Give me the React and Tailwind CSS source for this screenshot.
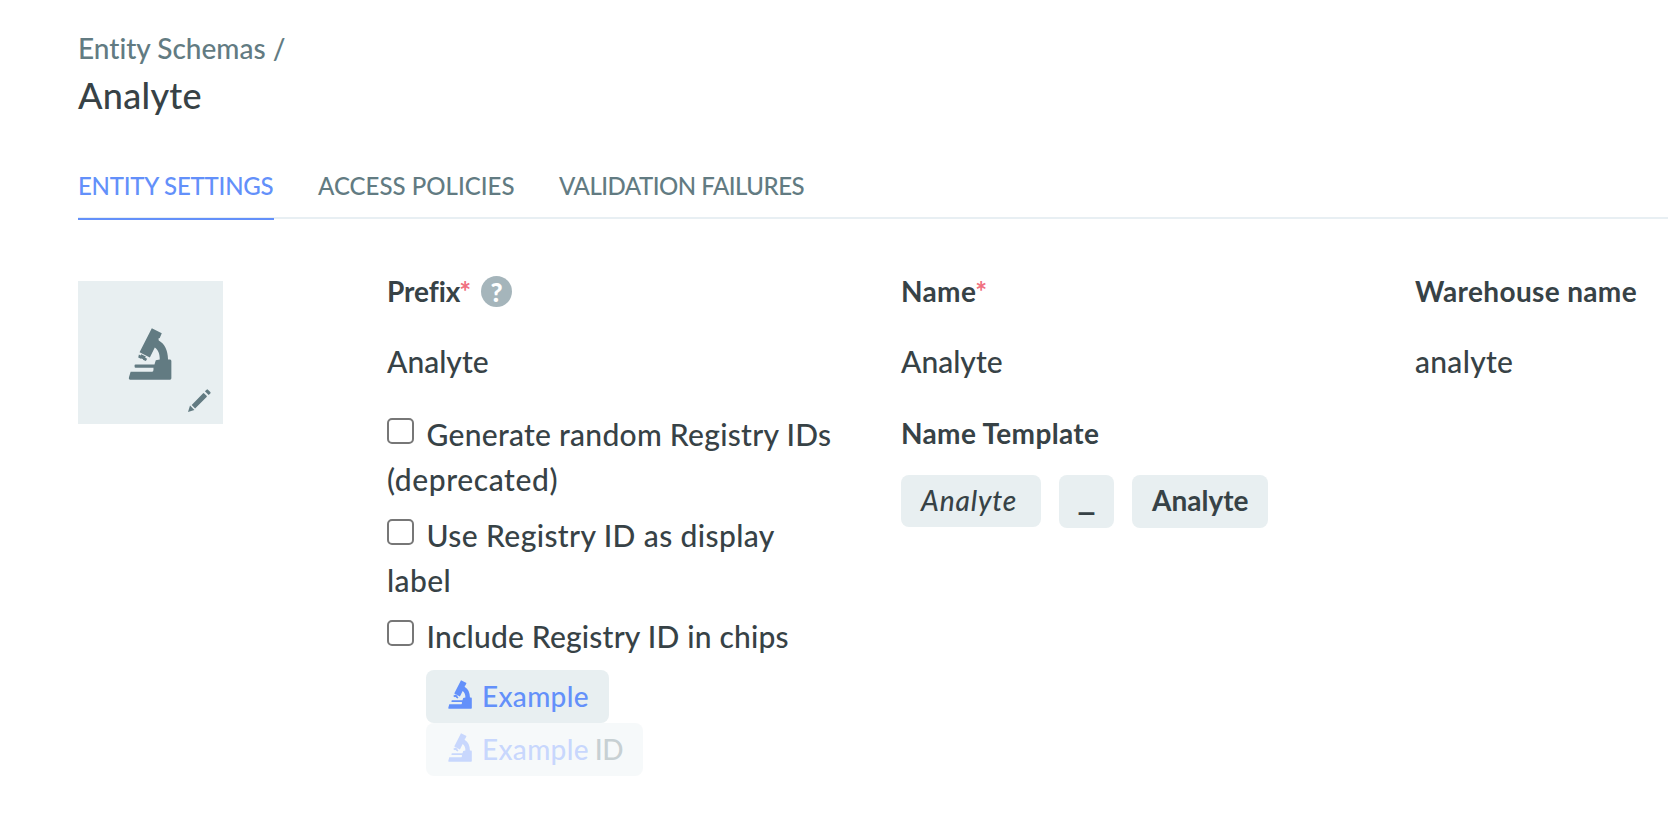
function Microscope({ className }) {
  return (
    <svg viewBox="205 174 131 157" className={className} fill="currentColor" aria-hidden="true">
      <path d="M276 175 L306 190 L300 204 L296 206 L297 212 C315 222 324 241 325 269 L331 269 Q335 270 335 274 V326 Q335 330 331 330 H210 Q205 330 207 323 L212 306 H277 Q281 306 281 300 V294 H227 Q224 294 224 291 V286 Q224 284 227 284 H284 L288 271 L300 269 C300 254 296 240 285 233 L270 263 L239 247 Z" />
      <path d="M237 254 L242 257 L244 253 L258 260 L256 264 L262 267 L258 274 L249 270 L250 268 L245 266 L243 267 L235 263 Z" />
    </svg>
  );
}

function Pencil({ className }) {
  return (
    <svg viewBox="384 356 68 68" className={className} fill="currentColor" aria-hidden="true">
      <path d="M390 405 L403 418 L384 424 Z" />
      <path d="M395 403 L428 369 Q430 367 432 369 L439 376 Q441 378 439 380 L405 414 Z" />
      <path d="M434 363 L439 358 Q441 356 443 358 L450 365 Q452 367 450 369 L445 374 Z" />
    </svg>
  );
}

function Tab({ children, className, active }) {
  return (
    <button
      className={`h-[50px] shrink-0 border-b-2 text-left text-[24px] leading-8 font-medium whitespace-nowrap pb-4 ${
        active ? 'border-[#6390fa] text-[#6390fa]' : 'border-transparent text-[#627b82]'
      } ${className}`}
    >
      {children}
    </button>
  );
}

function Label({ children, required, className = 'tracking-[0.35px]' }) {
  return (
    <span className={`flex text-[28px] leading-10 font-bold whitespace-nowrap ${className}`}>
      {children}
      {required && <span className="-ml-px font-bold text-[#f0717f] tracking-normal">*</span>}
    </span>
  );
}

function Value({ children }) {
  return <div className="mt-7 text-[30px] leading-[45px] font-medium">{children}</div>;
}

function Option({ children, className }) {
  return (
    <label className={`block text-[30px] leading-[45px] font-medium ${className}`}>
      <input
        type="checkbox"
        className="mr-[13px] inline-block size-[26.5px] appearance-none rounded-[5px] border-2 border-[#777] bg-white align-[2px]"
      />
      {children}
    </label>
  );
}

export default function App() {
  return (
    <div className="h-[822px] w-full overflow-hidden bg-white pt-[30px] pl-[78px] font-['Lato','Liberation_Sans',sans-serif] text-[#374246] [font-variant-ligatures:none]">
      <header>
        <div className="text-[28px] leading-9 font-medium text-[#627b82]">Entity Schemas /</div>
        <h1 className="mt-[7px] text-[36px] leading-[44px] font-medium tracking-[0.3px]">Analyte</h1>
      </header>

      <nav className="mt-[53px] flex h-[49px] gap-[44px] border-b-2 border-[#e8eff3]">
        <Tab active className="w-[196px] tracking-[-0.23px]">ENTITY SETTINGS</Tab>
        <Tab className="w-[197px] tracking-[0.02px]">ACCESS POLICIES</Tab>
        <Tab className="tracking-[-0.5px]">VALIDATION FAILURES</Tab>
      </nav>

      <main className="flex pt-[52px]">
        <div className="w-[309px] shrink-0 pt-[10px]">
          <div className="flex h-[143px] w-[145px] flex-col bg-[#e8eff1] pt-[47px] pr-3 pl-[50px] text-[#627b82]">
            <Microscope className="h-[52px] w-[44px]" />
            <Pencil className="mt-[9px] size-[23px] self-end" />
          </div>
        </div>

        <section className="w-[514px] shrink-0 pr-16">
          <div className="flex h-10">
            <div className="w-[94px]"><Label required className="tracking-[-0.05px]">Prefix</Label></div>
            <span className="mt-[5px] flex size-[31px] items-center justify-center rounded-full bg-[#a5b5bb] text-[26px] leading-none font-black text-white">?</span>
          </div>
          <Value>Analyte</Value>
          <Option className="mt-7">
            <span className="tracking-[0.28px]">Generate random Registry IDs</span>{' '}
            <span className="tracking-[0.6px]">(deprecated)</span>
          </Option>
          <Option className="mt-[11px]">
            <span className="tracking-[0.4px]">Use Registry ID as display label</span>
          </Option>
          <Option className="mt-[11px]">
            <span className="tracking-[0.2px]">Include Registry ID in chips</span>
          </Option>
          <div className="mt-[11px] ml-[39px] flex flex-col items-start text-[28px] leading-[53px] font-medium tracking-[0.3px] whitespace-nowrap">
            <div className="flex h-[53px] w-[183px] rounded-lg bg-[#e8eff1] pl-[22px] text-[#6390fa]">
              <Microscope className="mt-[10px] mr-[10px] h-[29px] w-6" />
              Example
            </div>
            <div className="flex h-[53px] w-[217px] rounded-lg bg-[#e8eff1] pl-[22px] text-[#6390fa] opacity-35">
              <Microscope className="mt-[10px] mr-[10px] h-[29px] w-6" />
              Example<span className="ml-[6px] tracking-[-0.5px] text-[#627b82]">ID</span>
            </div>
          </div>
        </section>

        <section className="w-[514px] shrink-0">
          <div className="flex h-10"><Label required>Name</Label></div>
          <Value>Analyte</Value>
          <div className="mt-[29px] flex h-10"><Label>Name Template</Label></div>
          <div className="mt-[22px] flex gap-[18px] text-[28px] leading-[50px]">
            <span className="h-[52px] w-[140px] rounded-lg bg-[#e8eff1] pl-5 font-medium tracking-[0.85px] italic">Analyte</span>
            <span className="h-[53px] w-[55px] rounded-lg bg-[#e8eff1] text-center text-[40px] leading-[38px] font-medium">_</span>
            <span className="h-[53px] w-[136px] rounded-lg bg-[#e8eff1] pl-5 font-bold">Analyte</span>
          </div>
        </section>

        <section className="shrink-0">
          <div className="flex h-10"><Label>Warehouse name</Label></div>
          <Value><span className="tracking-[0.3px]">analyte</span></Value>
        </section>
      </main>
    </div>
  );
}
